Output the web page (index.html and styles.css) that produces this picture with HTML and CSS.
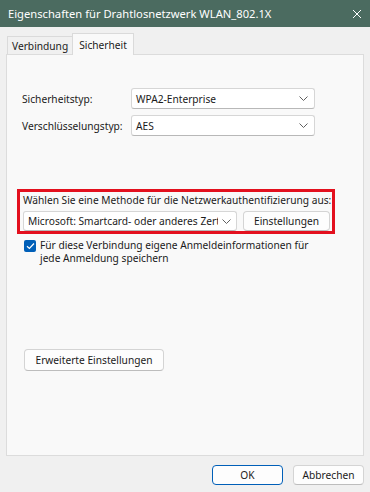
FILE: index.html
```html
<!DOCTYPE html>
<html lang="de">
<head>
<meta charset="utf-8">
<title>Eigenschaften für Drahtlosnetzwerk WLAN_802.1X</title>
<link rel="stylesheet" href="styles.css">
</head>
<body>
<div class="window">
  <div class="titlebar">
    <span class="title">Eigenschaften für Drahtlosnetzwerk WLAN_802.1X</span>
    <svg class="close" width="10" height="10" viewBox="0 0 10 10"><path d="M1 1 L9 9 M9 1 L1 9" stroke="#ffffff" stroke-width="1" fill="none"/></svg>
  </div>
  <div class="content">
    <div class="tabs">
      <div class="tab">Verbindung</div>
      <div class="tab active">Sicherheit</div>
    </div>
    <div class="panel">
      <div class="row">
        <span class="label">Sicherheitstyp:</span>
        <div class="select wide"><span>WPA2-Enterprise</span><svg class="chev" width="9" height="5" viewBox="0 0 9 5"><path d="M0.5 0.5 L4.5 4.5 L8.5 0.5" stroke="#606060" stroke-width="1" fill="none"/></svg></div>
      </div>
      <div class="row second">
        <span class="label">Verschlüsselungstyp:</span>
        <div class="select wide"><span>AES</span><svg class="chev" width="9" height="5" viewBox="0 0 9 5"><path d="M0.5 0.5 L4.5 4.5 L8.5 0.5" stroke="#606060" stroke-width="1" fill="none"/></svg></div>
      </div>
      <div class="methodbox">
        <div class="boxlabel">Wählen Sie eine Methode für die Netzwerkauthentifizierung aus:</div>
        <div class="boxrow">
          <div class="select method"><span class="clip">Microsoft: Smartcard- oder anderes Zertifikat</span><svg class="chev" width="9" height="5" viewBox="0 0 9 5"><path d="M0.5 0.5 L4.5 4.5 L8.5 0.5" stroke="#606060" stroke-width="1" fill="none"/></svg></div>
          <div class="btn settings">Einstellungen</div>
        </div>
      </div>
      <div class="check">
        <span class="box"><svg width="9" height="8" viewBox="0 0 9 8"><path d="M1 4.2 L3.4 6.5 L8 1.5" stroke="#ffffff" stroke-width="1.2" fill="none"/></svg></span>
        <span class="checktext">Für diese Verbindung eigene Anmeldeinformationen für<br>jede Anmeldung speichern</span>
      </div>
      <div class="btn advanced">Erweiterte Einstellungen</div>
    </div>
    <div class="footer">
      <div class="btn dlg default">OK</div>
      <div class="btn dlg">Abbrechen</div>
    </div>
  </div>
</div>
</body>
</html>
```
FILE: styles.css
```css
* { box-sizing: border-box; }
html, body { margin: 0; padding: 0; }
body {
  width: 370px;
  height: 492px;
  overflow: hidden;
  background: #f0f0f0;
  font-family: "Noto Sans", sans-serif;
  font-size: 10.2px;
  color: #1b1b1b;
}
.window { width: 370px; height: 492px; background: #f0f0f0; }
.titlebar {
  height: 27px;
  background: #4b6b60;
  color: #ffffff;
  display: flex;
  align-items: center;
  justify-content: space-between;
  padding: 0 8px 0 8px;
  font-size: 11.2px;
}
.close { display: block; }
.content { padding: 6px 6px 0 6px; }
.tabs {
  display: flex;
  align-items: flex-end;
  height: 21px;
  padding-left: 1px;
}
.tab {
  height: 18px;
  padding: 0 4px;
  display: flex;
  align-items: center;
  border: 1px solid #dadada;
  border-bottom: none;
  background: #f0f0f0;
}
.tab.active {
  height: 22px;
  margin-bottom: -1px;
  margin-left: -1px;
  background: #f9f9f9;
  position: relative;
  z-index: 1;
  padding: 0 6px;
}
.panel {
  height: 402px;
  border: 1px solid #dcdcdc;
  background: #f9f9f9;
  padding: 33px 0 0 15px;
  display: flex;
  flex-direction: column;
  align-items: flex-start;
}
.row { display: flex; align-items: center; height: 21px; }
.row.second { margin-top: 6px; }
.label { width: 109px; }
.select {
  height: 21px;
  background: #ffffff;
  border: 1px solid #d6d6d6;
  border-bottom-color: #b8b8b8;
  border-radius: 3px;
  display: flex;
  align-items: center;
  justify-content: space-between;
  padding: 0 6px 0 4px;
}
.select.wide { width: 184px; }
.chev { display: block; flex: none; }
.methodbox {
  margin: 53px 0 0 -5px;
  width: 318px;
  height: 45px;
  border: 3px solid #e3101e;
  padding: 0 0 0 3px;
}
.boxlabel { height: 17px; line-height: 17px; white-space: nowrap; }
.boxrow { display: flex; gap: 6px; margin-top: 2px; }
.select.method { width: 214px; height: 20px; padding-right: 5px; }
.clip { overflow: hidden; white-space: nowrap; width: 190px; }
.btn {
  height: 20px;
  background: #fdfdfd;
  border: 1px solid #d4d4d4;
  border-bottom-color: #bdbdbd;
  border-radius: 4px;
  display: flex;
  align-items: center;
  justify-content: center;
}
.btn.settings { width: 87px; }
.check { display: flex; align-items: flex-start; margin: 6px 0 0 2px; }
.box {
  width: 12px; height: 12px; border-radius: 2px;
  background: #005fb8;
  display: flex; align-items: center; justify-content: center;
  margin-right: 4px;
  flex: none;
}
.box svg { display: block; }
.checktext { line-height: 13px; margin-top: -1px; }
.btn.advanced { width: 140px; height: 22px; margin: 84px 0 0 2px; }
.footer {
  display: flex;
  justify-content: flex-end;
  gap: 10px;
  padding-top: 9px;
  padding-right: 0;
}
.btn.dlg { width: 71px; height: 20px; }
.btn.default { border: 1px solid #005fb8; }
```
